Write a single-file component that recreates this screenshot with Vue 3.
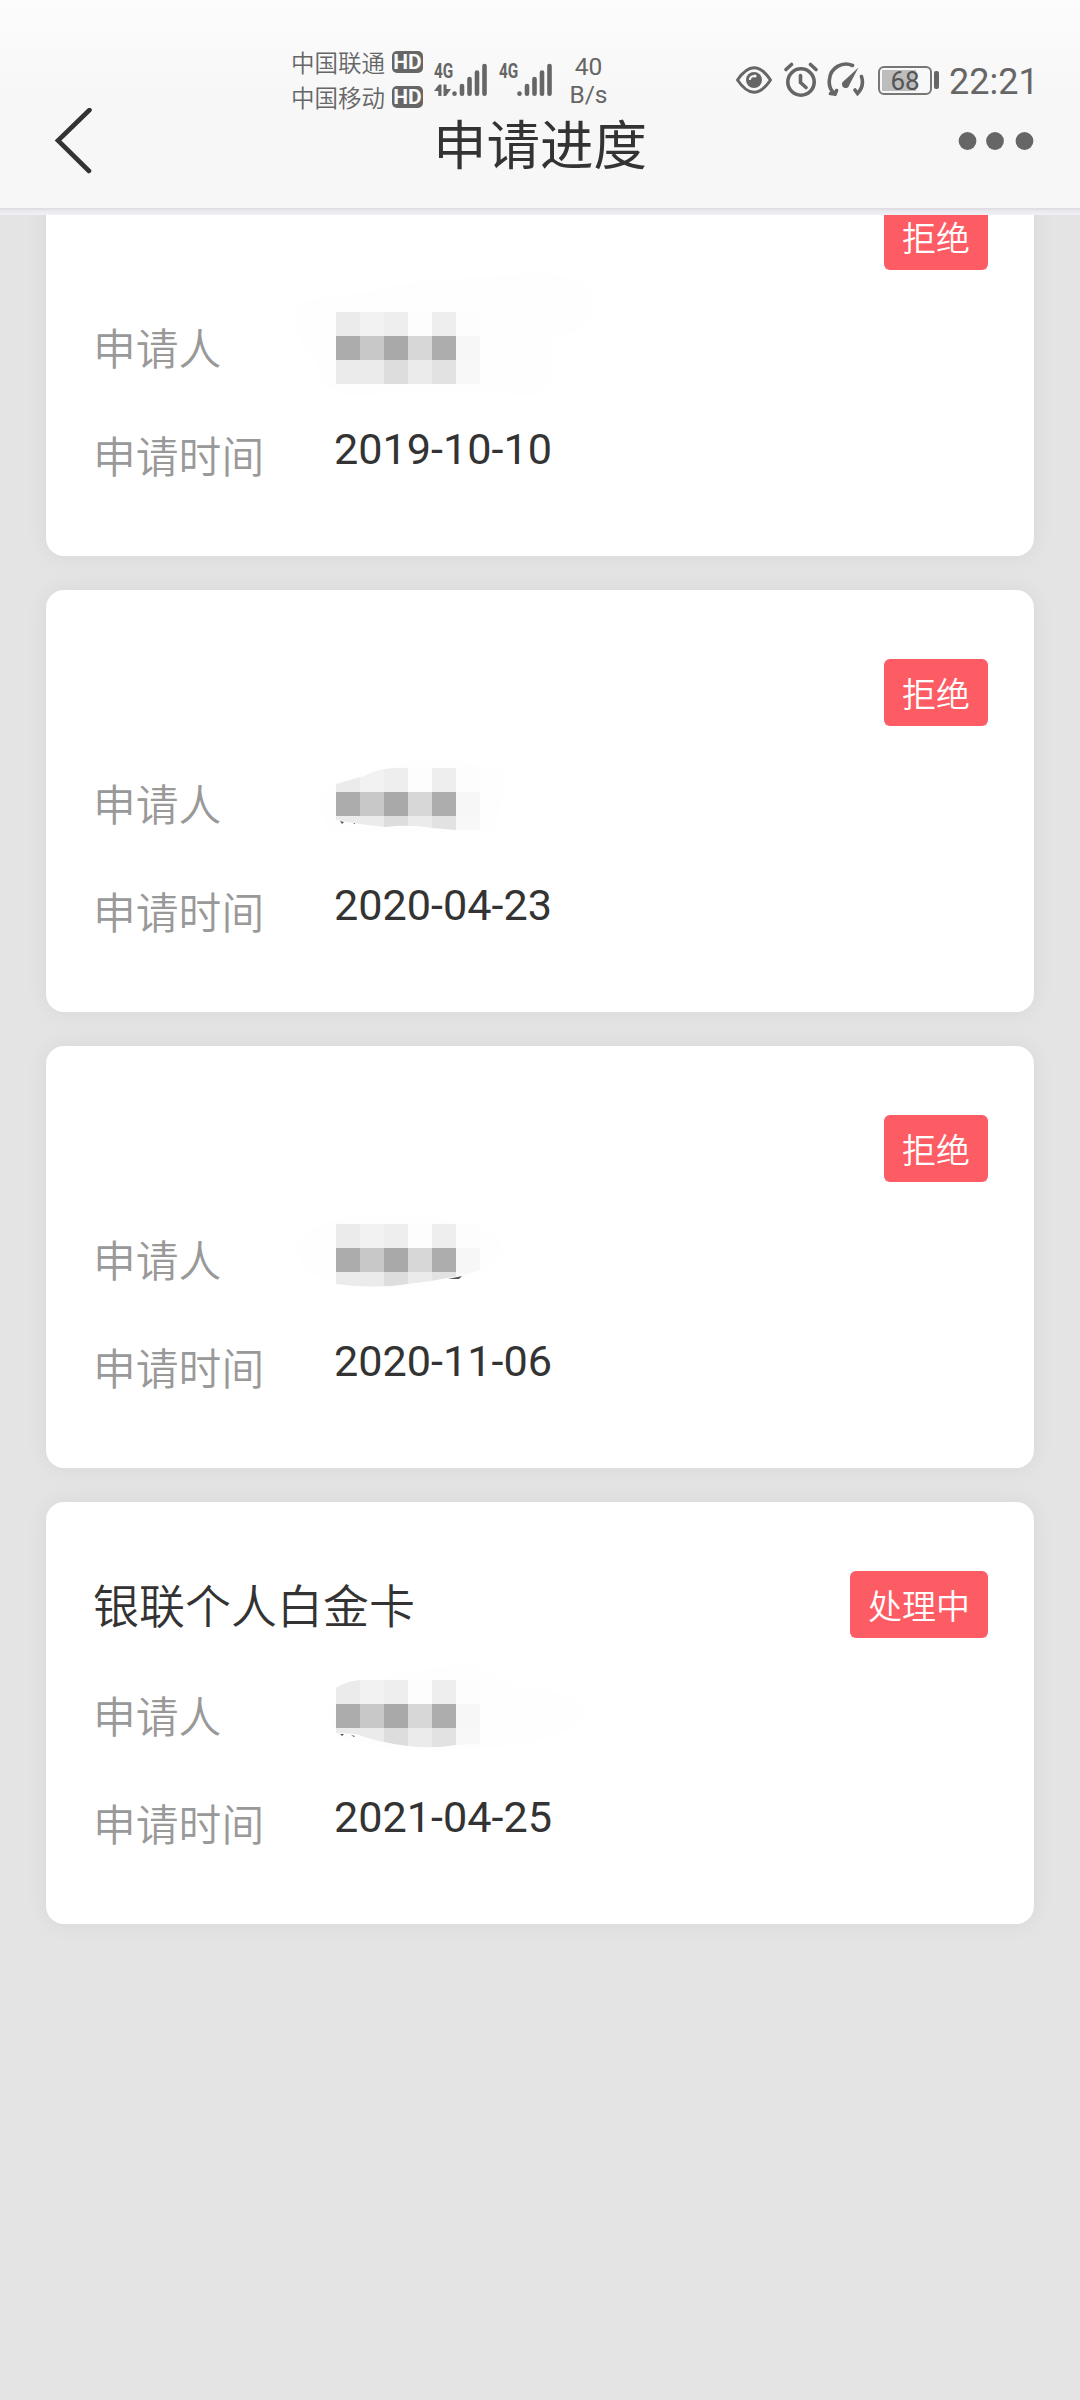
<script setup>
const tones = [
  ['#ebebeb', '#f2f2f2', '#eeeeee', '#fdfdfd', '#eeeeee', '#fdfdfd'],
  ['#acacac', '#c8c8c8', '#a9a9a9', '#d7d7d7', '#adadad', '#f7f7f7'],
  ['#ebebeb', '#ebebeb', '#dddddd', '#ebebeb', '#e2e2e2', '#f8f8f8'],
]
const cells = tones.flatMap((row, y) => row.map((fill, x) => ({ x: x * 24, y: y * 24, fill })))

const cards = [
  {
    title: '', status: '拒绝', date: '2019-10-10',
    halo: 'M-42 -4Q-30 -16 30 -20Q80 -34 200 -38Q262 -40 258 0Q250 22 214 26Q226 84 190 84Q120 74 20 84Q-24 78 -20 44Q-44 30 -42 -4Z',
    clip: 'M0 0H144V72H0Z', marks: [],
  },
  {
    title: '', status: '拒绝', date: '2020-04-23',
    halo: 'M-16 30Q0 0 110 -10L168 2Q166 60 150 66H0Q-18 50 -16 30Z',
    clip: 'M0 16L28 8Q42 1 56 0H144V62H120L96 60Q72 56 50 59Q20 56 0 52Z',
    marks: ['M4 53l4 1l-2 2z', 'M17 55l2 0l0 1z'],
  },
  {
    title: '', status: '拒绝', date: '2020-11-06',
    halo: 'M-38 20Q-20 -10 50 -10Q160 -8 168 30Q150 60 40 66Q-40 60 -38 20Z',
    clip: 'M0 0H144V46Q120 54 72 60Q40 65 0 60Z',
    marks: ['M112 55L126 52L123 55Z'],
  },
  {
    title: '银联个人白金卡', status: '处理中', date: '2021-04-25',
    halo: 'M-10 30Q0 -4 136 -16L180 6Q240 10 248 30Q244 60 150 68Q60 76 0 58Z',
    clip: 'M0 8Q10 1 24 0H144V64L120 65Q96 69 72 66Q40 62 20 54L0 53Z',
    marks: ['M4 54l4 0l-2 2z', 'M15 55l4 1l-1 1z'],
  },
]
</script>

<template>
  <div class="screen">
    <header class="header">
      <div class="status">
        <div class="carriers">
          <div class="carrier">中国联通<span class="hd">HD</span></div>
          <div class="carrier">中国移动<span class="hd">HD</span></div>
        </div>
        <div v-for="n in 2" :key="n" class="signal">
          <span class="net">4G</span>
          <svg width="56" height="36" viewBox="0 0 56 36">
            <g v-if="n === 1" fill="#666">
              <path d="M0 30L5 23.500H7.500V35H4.300V30Z" />
              <path d="M9.500 23.500H12.500V28H17L12 35H9.500Z" />
            </g>
            <g stroke="#666" stroke-width="4.600" stroke-linecap="round">
              <path d="M20.500 32.500V32.700M28 25V32.700M35.500 18V32.700M43 11.500V32.700M50.500 5V32.700" />
            </g>
          </svg>
        </div>
        <div class="speed"><span>40</span><span>B/s</span></div>
        <div class="tray">
          <svg class="eye" width="36" height="36" viewBox="0 0 36 36" fill="none" stroke="#666" stroke-width="3">
            <path d="M1.500 18Q18-6.500 34.500 18Q18 42.500 1.500 18Z" stroke-linejoin="round" />
            <circle cx="18" cy="18" r="8" fill="#666" stroke="none" />
            <path d="M13.800 18Q14 14.500 18 14" stroke="#f9f9f9" stroke-width="2" />
            <circle cx="19" cy="14" r="1.600" fill="#f9f9f9" stroke="none" />
          </svg>
          <svg class="alarm" width="34" height="36" viewBox="0 0 34 36" fill="none" stroke="#666" stroke-width="3.600" stroke-linecap="round">
            <circle cx="17" cy="20" r="13.200" />
            <path d="M16.500 13.500V20.500L22 25.500M2 7.500L7.500 2.500M32 7.500L26.500 2.500" />
          </svg>
          <svg class="gauge" width="38" height="36" viewBox="0 0 38 36" fill="none" stroke="#666" stroke-width="3.600" stroke-linecap="round">
            <path d="M8 32.200L9.500 28.500M7.500 32L3.500 31.500M7.500 32A17 17 0 0 1 2.500 17A16.500 16.500 0 0 1 25.500 3.500M34.500 14.500A17 17 0 0 1 30.500 31.500L28 28" />
            <path d="M31.500 5.500L22.500 22.500A3.800 3.800 0 1 1 16.800 19Z" fill="#666" stroke="none" />
          </svg>
          <div class="battery"><span>68</span></div>
          <i class="nub"></i>
          <span class="clock">22:21</span>
        </div>
      </div>
      <nav class="nav">
        <svg class="back" width="40" height="66" viewBox="0 0 40 66" fill="none" stroke="#333" stroke-width="4.600" stroke-linecap="round">
          <path d="M35.500 2L4 32.500L35 63" />
        </svg>
        <h1>申请进度</h1>
        <svg class="more" width="76" height="20" viewBox="0 0 76 20" fill="#666">
          <circle cx="9.500" cy="10" r="8.900" />
          <circle cx="37" cy="10" r="8.900" />
          <circle cx="66.500" cy="10" r="8.900" />
        </svg>
      </nav>
    </header>
    <main class="list">
      <section v-for="(card, i) in cards" :key="card.date" class="card">
        <div class="top">
          <h2>{{ card.title }}</h2>
          <span class="badge">{{ card.status }}</span>
        </div>
        <div class="row">
          <span class="label">申请人</span>
          <svg class="mosaic" width="144" height="72" viewBox="0 0 144 72">
            <clipPath :id="'brush' + i"><path :d="card.clip" /></clipPath>
            <path :d="card.halo" fill="#fefefe" />
            <g :clip-path="`url(#brush${i})`" shape-rendering="crispEdges">
              <rect v-for="c in cells" :key="c.x + '-' + c.y" :x="c.x" :y="c.y" width="24" height="24" :fill="c.fill" />
            </g>
            <path v-for="m in card.marks" :key="m" :d="m" fill="#555" />
          </svg>
        </div>
        <div class="row">
          <span class="label">申请时间</span>
          <span class="date">{{ card.date }}</span>
        </div>
      </section>
    </main>
  </div>
</template>

<style>
body {
  margin: 0;
  background: #e4e4e4;
}
</style>

<style scoped>
.screen {
  width: 1080px;
  height: 2400px;
  display: flex;
  flex-direction: column;
  overflow: hidden;
  background: #e4e4e4;
  font-family: Roboto, "Noto Sans CJK SC", sans-serif;
  color: #333;
}
.header {
  position: relative;
  z-index: 1;
  flex: none;
  height: 215px;
  box-sizing: border-box;
  background:
    linear-gradient(#dadae0, #e9e9ef 3px, #f0f0f6) 0 208px / 100% 7px no-repeat,
    linear-gradient(#fcfcfc, #f7f7f7 100px);
}
.status {
  display: flex;
  align-items: flex-start;
  height: 108px;
  padding-left: 291px;
  color: #666;
}
.carriers {
  width: 143px;
  padding-top: 44px;
}
.carrier {
  display: flex;
  align-items: center;
  height: 35px;
  font-size: 23.500px;
  font-weight: 350;
  white-space: nowrap;
  font-family: "Noto Sans CJK SC", sans-serif;
}
.hd {
  width: 31px;
  height: 22px;
  margin: 1px 0 0 7px;
  border-radius: 5px;
  background: #666;
  color: #f9f9f9;
  font: 700 21px/23px Roboto, sans-serif;
  text-align: center;
}
.signal {
  position: relative;
  width: 65px;
  padding-top: 61px;
}
.signal svg {
  display: block;
}
.net {
  position: absolute;
  left: 0;
  top: 60px;
  font: 700 21px/22px Roboto, sans-serif;
  transform: scaleX(0.730);
  transform-origin: left;
}
.speed {
  display: flex;
  flex-direction: column;
  align-items: center;
  width: 49px;
  padding-top: 53px;
  font-size: 24.500px;
  line-height: 28px;
}
.tray {
  display: flex;
  align-items: center;
  height: 36px;
  margin: 62px 0 0 123px;
}
.alarm {
  margin-left: 12px;
}
.gauge {
  margin-left: 9px;
}
.battery {
  width: 54px;
  height: 29px;
  box-sizing: border-box;
  margin-left: 13px;
  border: 2px solid #777;
  border-radius: 6px;
  background: linear-gradient(#bdbdbd, #bdbdbd) 2px 2px / 34px 21px no-repeat;
  color: #555;
  font-size: 26px;
  line-height: 26px;
  text-align: center;
}
.nub {
  width: 5px;
  height: 18px;
  margin-left: 2px;
  border-radius: 2px;
  background: #666;
}
.clock {
  margin: 4px 0 0 10px;
  font-size: 36px;
  line-height: 40px;
}
.nav {
  display: flex;
  align-items: center;
  height: 66px;
  padding: 0 46px 0 54px;
}
h1 {
  flex: 1;
  margin: 0 0 0 28px;
  font-size: 53.500px;
  font-weight: 400;
  line-height: 67px;
  text-align: center;
  font-family: "Noto Sans CJK SC", sans-serif;
}
.list {
  display: flex;
  flex-direction: column;
  gap: 34.500px;
  margin-top: -81px;
  padding: 0 46px;
}
.card {
  height: 421.500px;
  box-sizing: border-box;
  padding: 69px 46px 0 47px;
  border-radius: 18px;
  background: #fff;
  box-shadow: 0 0 24px rgba(0, 0, 0, 0.060);
}
.top {
  display: flex;
  justify-content: space-between;
  height: 91px;
}
h2 {
  margin: 0;
  font-size: 46px;
  font-weight: 350;
  line-height: 64px;
  font-family: "Noto Sans CJK SC", sans-serif;
}
.badge {
  height: 67px;
  padding: 0 18px;
  border-radius: 6px;
  background: #fe5c64;
  color: #fff;
  font: 350 34px/67px "Noto Sans CJK SC", sans-serif;
}
.row {
  display: flex;
  height: 108px;
}
.label {
  width: 243px;
  color: #999;
  font: 350 42.800px/105px "Noto Sans CJK SC", sans-serif;
}
.mosaic {
  margin-top: 18px;
  overflow: visible;
}
.date {
  margin-left: -2px;
  font-size: 43.200px;
  line-height: 96px;
}
</style>
